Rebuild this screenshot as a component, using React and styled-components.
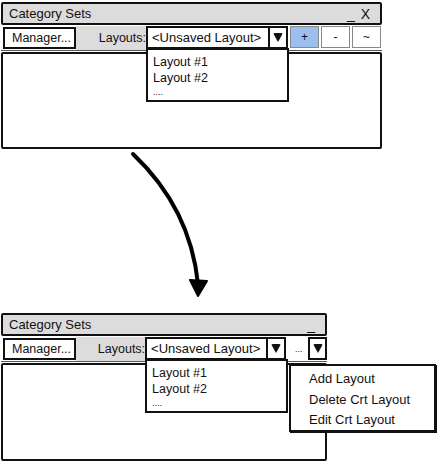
import React from "react";
import styled, { createGlobalStyle } from "styled-components";

const GlobalStyle = createGlobalStyle`
  html, body {
    margin: 0;
    padding: 0;
    background: #ffffff;
  }
  body {
    font-family: "Liberation Sans", Arial, sans-serif;
    font-size: 13px;
    color: #111;
  }
  #root {
    width: 438px;
    height: 462px;
    overflow: hidden;
  }
`;

export default function App() {
  return (
    <>
      <GlobalStyle />
      <Page>
        <Window $w={381}>
          <TitleBar>
            <span>Category Sets</span>
            <WinControls>_ X</WinControls>
          </TitleBar>
          <Toolbar>
            <Button>Manager...</Button>
            <LabelCell>Layouts:</LabelCell>
            <Combo>
              <ComboText>&lt;Unsaved Layout&gt;</ComboText>
              <DropList>
                <DropItem>Layout #1</DropItem>
                <DropItem>Layout #2</DropItem>
                <DropMore>....</DropMore>
              </DropList>
            </Combo>
            <ArrowButton>
              <Triangle />
            </ArrowButton>
            <SmallButton $active>+</SmallButton>
            <SmallButton>-</SmallButton>
            <SmallButton>~</SmallButton>
          </Toolbar>
          <Content $h={97} />
        </Window>

        <FlowArrow viewBox="0 149 438 164" width="438" height="164">
          <path
            d="M132 154 C 170 190, 192 235, 197 284"
            fill="none"
            stroke="#000"
            strokeWidth="4"
            strokeLinecap="round"
          />
          <path d="M189 280 L 206 281 L 197 296 Z" fill="#000" stroke="#000" strokeWidth="2" strokeLinejoin="round" />
        </FlowArrow>

        <Window $w={326}>
          <TitleBar>
            <span>Category Sets</span>
            <WinControls>_</WinControls>
          </TitleBar>
          <Toolbar>
            <Button>Manager...</Button>
            <LabelCell>Layouts:</LabelCell>
            <Combo>
              <ComboText>&lt;Unsaved Layout&gt;</ComboText>
              <DropList>
                <DropItem>Layout #1</DropItem>
                <DropItem>Layout #2</DropItem>
                <DropMore>....</DropMore>
              </DropList>
            </Combo>
            <ArrowButton>
              <Triangle />
            </ArrowButton>
            <MoreButton>...</MoreButton>
            <ArrowButton $plain>
              <Triangle />
            </ArrowButton>
          </Toolbar>
          <Content $h={98} />
          <Menu>
            <MenuItem>Add Layout</MenuItem>
            <MenuItem>Delete Crt Layout</MenuItem>
            <MenuItem>Edit Crt Layout</MenuItem>
          </Menu>
        </Window>
      </Page>
    </>
  );
}

const Page = styled.div`
  display: flex;
  flex-direction: column;
  padding: 2px 0 0 1px;
`;

const Window = styled.div`
  position: relative;
  width: ${(p) => p.$w}px;
  display: flex;
  flex-direction: column;
  gap: 1px;
`;

const TitleBar = styled.div`
  height: 23px;
  box-sizing: border-box;
  border: 2px solid #111;
  border-radius: 2px;
  background: #dcdcdc;
  display: flex;
  align-items: center;
  justify-content: space-between;
  padding: 0 9px 0 6px;
  font-size: 13px;
`;

const WinControls = styled.span`
  font-size: 14px;
  letter-spacing: 1px;
`;

const Toolbar = styled.div`
  height: 24px;
  display: flex;
  align-items: center;
  padding-left: 2px;
  border-bottom: 1px solid #555;
`;

const Button = styled.div`
  height: 22px;
  width: 73px;
  box-sizing: border-box;
  border: 2px solid #111;
  background: #fff;
  display: flex;
  align-items: center;
  padding-left: 7px;
  font-size: 12.5px;
`;

const LabelCell = styled.div`
  height: 24px;
  width: 70px;
  box-sizing: border-box;
  background: #dcdcdc;
  display: flex;
  align-items: center;
  justify-content: flex-end;
  font-size: 12.5px;
`;

const Combo = styled.div`
  position: relative;
  align-self: flex-start;
  height: 23px;
  width: 123px;
  box-sizing: border-box;
  border: 2px solid #111;
  border-right-width: 1px;
  background: #fff;
  display: flex;
  align-items: center;
  padding-left: 4px;
`;

const ComboText = styled.span`
  font-size: 13px;
  white-space: nowrap;
`;

const DropList = styled.div`
  position: absolute;
  left: -2px;
  top: 20px;
  width: 143px;
  height: 54px;
  box-sizing: border-box;
  border: 2px solid #111;
  background: #fff;
  padding: 4px 0 0 5px;
  display: flex;
  flex-direction: column;
  z-index: 2;
`;

const DropItem = styled.div`
  height: 16px;
  line-height: 16px;
  font-size: 12.5px;
`;

const DropMore = styled.div`
  font-size: 9px;
  line-height: 12px;
`;

const ArrowButton = styled.div`
  align-self: flex-start;
  height: 23px;
  width: ${(p) => (p.$plain ? 19 : 19)}px;
  box-sizing: border-box;
  border: 2px solid #111;
  border-left-width: ${(p) => (p.$plain ? 2 : 1)}px;
  background: #fff;
  display: flex;
  align-items: center;
  justify-content: center;
`;

const Triangle = styled.span`
  width: 0;
  height: 0;
  border-left: 5px solid transparent;
  border-right: 5px solid transparent;
  border-top: 9px solid #111;
  border-radius: 2px;
`;

const SmallButton = styled.div`
  align-self: flex-start;
  margin-left: 2px;
  height: 22px;
  width: 29px;
  box-sizing: border-box;
  border: 1px solid #888;
  background: ${(p) => (p.$active ? "#9dbff0" : "#fff")};
  display: flex;
  align-items: center;
  justify-content: center;
  font-size: 12px;
`;

const MoreButton = styled.div`
  align-self: flex-start;
  margin: 1px 1px 0 4px;
  height: 22px;
  width: 17px;
  box-sizing: border-box;
  background: #fff;
  display: flex;
  align-items: center;
  justify-content: center;
  font-size: 9px;
`;

const Content = styled.div`
  height: ${(p) => p.$h}px;
  box-sizing: border-box;
  border: 2px solid #111;
  border-radius: 2px;
  background: #fff;
`;

const FlowArrow = styled.svg`
  display: block;
`;

const Menu = styled.div`
  position: absolute;
  left: 288px;
  top: 51px;
  width: 147px;
  height: 68px;
  box-sizing: border-box;
  border: 2px solid #111;
  box-shadow: 1px 1px 0 #111;
  background: #fff;
  padding: 3px 0 0 18px;
  display: flex;
  flex-direction: column;
  z-index: 3;
`;

const MenuItem = styled.div`
  height: 20.5px;
  line-height: 20.5px;
  font-size: 13px;
  white-space: nowrap;
`;
